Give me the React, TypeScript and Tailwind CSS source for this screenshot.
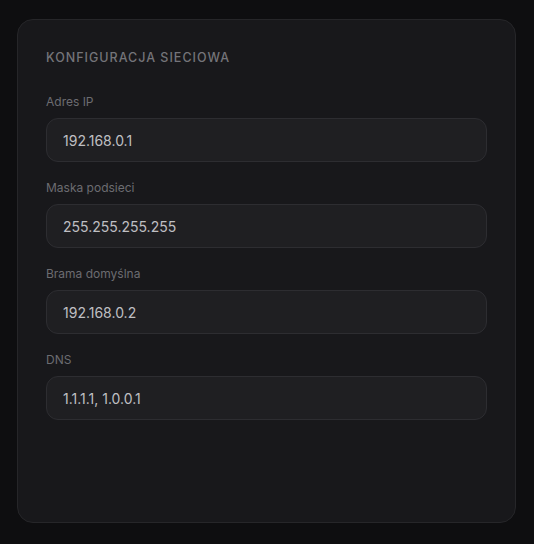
import * as React from 'react';

const fields = [
  { label: 'Adres IP', value: '192.168.0.1' },
  { label: 'Maska podsieci', value: '255.255.255.255' },
  { label: 'Brama domyślna', value: '192.168.0.2' },
  { label: 'DNS', value: '1.1.1.1, 1.0.0.1' },
];

const Field: React.FC<{ label: string; value: string }> = ({ label, value }) => (
  <label className="flex flex-col">
    <span className="mb-2 text-[12px] leading-4 text-[#6c6c71]">{label}</span>
    <input
      defaultValue={value}
      className="h-[44px] w-full rounded-xl border border-[#2d2d31] bg-[#1f1f22] px-4 text-[14px] text-[#bfbfc3] outline-none"
    />
  </label>
);

export const App: React.FC = () => {
  return (
    <main
      className="min-h-[544px] bg-[#0e0e10] pt-[19px] pl-[17px] pr-[18px] pb-[21px]"
      style={{ fontFamily: 'Inter, "Liberation Sans", sans-serif' }}
    >
      <section className="h-[504px] rounded-2xl border border-[#262629] bg-[#18181b] p-7">
        <h2 className="mb-[26px] text-[12.5px] font-medium leading-5 tracking-[0.08em] text-[#747479]">
          KONFIGURACJA SIECIOWA
        </h2>
        <div className="flex flex-col gap-[18px]">
          {fields.map((f) => (
            <Field key={f.label} label={f.label} value={f.value} />
          ))}
        </div>
      </section>
    </main>
  );
};

export default App;
